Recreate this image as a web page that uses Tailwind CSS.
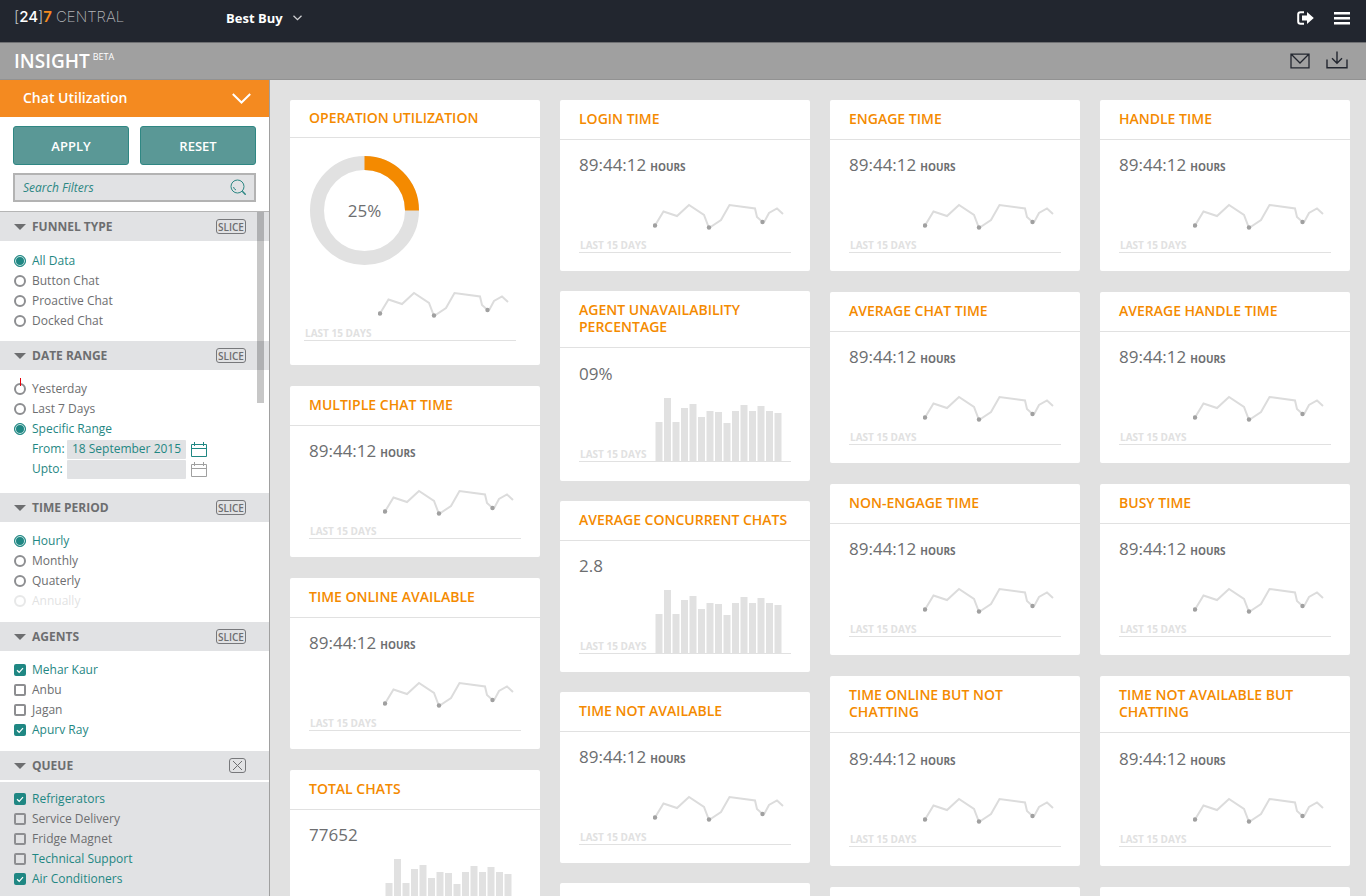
<!DOCTYPE html>
<html lang="en">
<head>
    <meta charset="UTF-8">
    <meta name="viewport" content="width=device-width, initial-scale=1.0">
    <title>[24]7 Central - Insight</title>
    <script src="https://cdn.jsdelivr.net/npm/@tailwindcss/browser@4"></script>
</head>
<body class="flex h-screen flex-col overflow-hidden bg-[#e1e1e1] font-['Open_Sans','Noto_Sans',sans-serif] text-[#6d6e70]">
    <!-- shared drawings -->
    <svg class="hidden" xmlns="http://www.w3.org/2000/svg">
        <symbol id="spark" viewBox="0 0 132 28">
            <path d="M2 22.5 10.5 8.5 24 13 36 2 51 12 56 25 68 17 76.5 2 102 5.5 104 14 109.5 19 111.5 18.5 116 10 124 5.5 130 11" fill="none" stroke="#dcdcdc" stroke-width="2"/>
            <g fill="#a0a0a0"><circle cx="2" cy="22.5" r="2.2"/><circle cx="56" cy="24.5" r="2.2"/><circle cx="109.5" cy="19" r="2.2"/></g>
        </symbol>
        <symbol id="bars" viewBox="0 0 128 63">
            <path fill="#e1e1e1" d="M.5 24h7v39h-7zM9 0h7v63H9zM17.5 24h7v39h-7zM26 10h7v53h-7zM34.5 6h7v57h-7zM43 19h7v44h-7zM51.5 13h7v50h-7zM60 14h7v49h-7zM68.5 25h7v38h-7zM77 13h7v50h-7zM85.5 7h7v56h-7zM94 13h7v50h-7zM102.5 8h7v55h-7zM111 13h7v50h-7zM119.5 15h7v48h-7z"/>
        </symbol>
        <symbol id="cal" viewBox="0 0 16 15">
            <path d="M.5 2.5h15v12H.5zM.5 6.5h15M3.5 0v4M12.5 0v4" fill="none" stroke="currentColor"/>
        </symbol>
        <symbol id="tri" viewBox="0 0 12 6"><path d="M0 0h12L6 6z" fill="currentColor"/></symbol>
        <symbol id="tick" viewBox="0 0 12 12"><path d="M3 6.2 5.2 8.3 9 4.2" fill="none" stroke="#fff" stroke-width="1.2"/></symbol>
    </svg>

    <header class="flex h-[43px] shrink-0 items-start border-b border-[#6f7073] bg-[#22262f] text-white">
        <a href="#" class="flex w-[218px] pl-[14px] pt-[7px] font-['Inter',sans-serif] text-[15px] leading-5">
            <span class="font-light text-[#c4c5c8]">[</span><span class="font-medium">24</span><span class="font-light text-[#c4c5c8]">]</span><span class="font-semibold text-[#f58a1f]">7</span>
            <span class="pl-1 font-extralight text-[#b4b5b9]">CENTRAL</span>
        </a>
        <div class="flex items-center pl-2 pt-2">
            <select aria-label="Client" class="w-[67px] appearance-none bg-transparent text-[13px] font-bold leading-5 outline-none">
                <option>Best Buy</option>
            </select>
            <svg class="h-[6px] w-[9px]" viewBox="0 0 9 6" fill="none" stroke="#d0d1d3" stroke-width="1.3"><path d="M.5.8 4.5 4.6 8.5.8"/></svg>
        </div>
        <div class="ml-auto flex items-center gap-5 pr-4 pt-[11px]">
            <button type="button" aria-label="Log out">
                <svg class="h-[14px] w-[17px]" viewBox="0 0 17 14"><path d="M7 1.2H3.5Q1.2 1.2 1.2 3.5v7q0 2.3 2.3 2.3H7" fill="none" stroke="#fff" stroke-width="2"/><path d="M5 4.5h5V1l6.8 6L10 13V9.5H5z" fill="#fff"/></svg>
            </button>
            <button type="button" aria-label="Menu">
                <svg class="h-[14px] w-4" viewBox="0 0 16 14" fill="#fff"><path d="M0 1h16v2.5H0zM0 6h16v2.5H0zM0 11h16v2.5H0z"/></svg>
            </button>
        </div>
    </header>

    <div class="flex h-[37px] shrink-0 items-center justify-between border-b border-[#929292] bg-[#a0a0a0] pl-[14px] pr-[18px]">
        <h1 class="flex text-[19px] font-semibold leading-6 text-white">INSIGHT<span class="pl-[3px] text-[9px] font-normal leading-4">BETA</span></h1>
        <div class="flex gap-4 text-[#22262f]">
            <button type="button" aria-label="Mail">
                <svg class="h-5 w-5" viewBox="0 0 20 20" fill="none" stroke="currentColor" stroke-width="1.3"><path d="M1 3.2h18v13.6H1zM1.5 3.5 10 12l8.500-8.500"/></svg>
            </button>
            <button type="button" aria-label="Download">
                <svg class="h-5 w-[22px]" viewBox="0 0 22 20" fill="none" stroke="currentColor" stroke-width="1.4"><path d="M1 8.5v8.300h20V8.5M11 .5v11.500M6 7.300l5 5 5-5"/></svg>
            </button>
        </div>
    </div>

    <div class="flex min-h-0 flex-1">
        <aside class="flex w-[270px] shrink-0 flex-col border-r border-[#a0a0a0] bg-white">
            <div class="grid shrink-0 items-center bg-[#f48a20] text-white">
                <select aria-label="Report" class="col-start-1 row-start-1 h-[37px] appearance-none bg-transparent pb-[2px] pl-[23px] text-[14px] font-semibold outline-none">
                    <option>Chat Utilization</option>
                </select>
                <svg class="pointer-events-none col-start-1 row-start-1 mr-[18px] h-[11px] w-[19px] justify-self-end" viewBox="0 0 19 11" fill="none" stroke="#fff" stroke-width="2"><path d="M.8 1 9.5 9.5 18.2 1"/></svg>
            </div>
            <div class="grid shrink-0 grid-cols-2 gap-x-[11px] gap-y-2 border-b border-[#b5b5b5] px-[13px] py-[9px]">
                <button type="button" class="h-[39px] rounded-[3px] border border-[#2f8783] bg-[#5a9896] pt-[2px] text-[13px] font-semibold text-white">APPLY</button>
                <button type="button" class="h-[39px] rounded-[3px] border border-[#2f8783] bg-[#5a9896] pt-[2px] text-[13px] font-semibold text-white">RESET</button>
                <div class="col-span-2 flex h-[29px] items-center border-2 border-[#b3b3b3] bg-[#e1e2e4] px-2">
                    <input type="search" aria-label="Search Filters" placeholder="Search Filters" class="min-w-0 flex-1 bg-transparent text-[12px] italic outline-none placeholder:text-[#2c8783]">
                    <svg class="mb-[2px] h-4 w-4" viewBox="0 0 16 16" fill="none" stroke="#2c8783"><circle cx="7.5" cy="7.5" r="6.5"/><path d="M3.5 8a4 4 0 0 0 2.5 3"/><path d="m12.3 12.3 3.4 3.4" stroke-width="1.5"/></svg>
                </div>
            </div>
            <form class="relative min-h-0 flex-1 overflow-hidden text-[12px] leading-5">
                <div id="filters"></div>
                <div class="absolute right-[5px] top-0 h-[191px] w-[7px] bg-black/22"></div>
            </form>
        </aside>

        <main id="cards" class="grid min-w-0 flex-1 grid-cols-4 gap-x-5 overflow-hidden pl-5 pr-4 pt-5"></main>
    </div>

    <script>
        const ON = 'text-[#1f8783]';
        const filters = [
            { name: 'FUNNEL TYPE', type: 'radio', pad: 'pt-[10px] pb-[10px]', items: ['*All Data', 'Button Chat', 'Proactive Chat', 'Docked Chat'] },
            { name: 'DATE RANGE', type: 'radio', pad: 'pt-[9px] pb-[14px]', items: ['Yesterday', 'Last 7 Days', '*Specific Range'], range: true },
            { name: 'TIME PERIOD', type: 'radio', pad: 'pt-[9px] pb-[11px]', items: ['*Hourly', 'Monthly', 'Quaterly', '-Annually'] },
            { name: 'AGENTS', type: 'checkbox', pad: 'pt-[9px] pb-[11px]', items: ['*Mehar Kaur', 'Anbu', 'Jagan', '*Apurv Ray'] },
            { name: 'QUEUE', type: 'checkbox', pad: 'border-t-2 border-white bg-[#e1e2e4] pt-[7px] pb-[7px]', items: ['*Refrigerators', 'Service Delivery', 'Fridge Magnet', '+Technical Support', '*Air Conditioners'], close: true }
        ];

        // leading mark: * checked, + highlighted, - disabled
        function option(f, raw) {
            const flag = '*-+'.includes(raw[0]) ? raw[0] : '';
            const text = flag ? raw.slice(1) : raw;
            const tone = flag === '-' ? 'opacity-20' : flag ? ON : '';
            const attrs = (flag === '*' ? 'checked ' : '') + (flag === '-' ? 'disabled' : '');
            const box = f.type === 'radio'
                ? 'rounded-full checked:border checked:shadow-[inset_0_0_0_1px_#d5eae9]'
                : 'rounded-[2px]';
            return `<label class="relative flex items-center gap-[6px] ${tone}">
                <span class="grid">
                    <input type="${f.type}" name="${f.name}" ${attrs} class="peer col-start-1 row-start-1 h-3 w-3 appearance-none border-2 border-[#8d8e91] checked:border-[#1f8783] checked:bg-[#1f8783] ${box}">
                    ${f.type === 'checkbox' ? '<svg class="invisible col-start-1 row-start-1 h-3 w-3 peer-checked:visible"><use href="#tick"/></svg>' : ''}
                </span>${text}
                ${text === 'Yesterday' ? '<i class="absolute left-[6px] top-[-1px] h-2 w-px bg-red-600"></i>' : ''}
            </label>`;
        }

        function dateRow(id, label, value, tone) {
            return `<div class="flex h-5 items-center pl-[18px] ${ON}">
                <label for="${id}" class="w-[35px]">${label}</label>
                <input id="${id}" type="text" value="${value}" class="h-[19px] w-[119px] rounded-[1px] bg-[#e1e2e4] text-center outline-none">
                <button type="button" aria-label="Pick date" class="ml-[5px] ${tone}"><svg class="h-[15px] w-4"><use href="#cal"/></svg></button>
            </div>`;
        }

        document.getElementById('filters').innerHTML = filters.map(f => `
            <section>
                <h2 class="flex h-[29px] items-center bg-[#e1e2e4] pl-[14px] pr-[23px]">
                    <button type="button" class="flex items-center gap-[6px] font-bold"><svg class="h-[6px] w-3"><use href="#tri"/></svg>${f.name}</button>
                    ${f.close
                        ? '<button type="button" aria-label="Remove filter" class="ml-auto grid h-[15px] w-[17px] place-items-center rounded-[3px] border border-[#77787b]"><svg class="h-[9px] w-[9px]" viewBox="0 0 9 9" stroke="#6d6e70"><path d="M0 0 9 9M9 0 0 9"/></svg></button>'
                        : '<button type="button" class="ml-auto h-[15px] w-[30px] rounded-[3px] border border-[#77787b] text-[10px] font-semibold leading-3">SLICE</button>'}
                </h2>
                <div class="pl-[14px] ${f.pad}">
                    ${f.items.map(i => option(f, i)).join('')}
                    ${f.range ? dateRow('from', 'From:', '18 September 2015', '') + dateRow('upto', 'Upto:', '', 'text-[#a0a0a0]') : ''}
                </div>
            </section>`).join('');

        const T = '89:44:12';
        const columns = [
            { gap: 'gap-[21px]', cards: [
                { title: 'OPERATION UTILIZATION', donut: true },
                { title: 'MULTIPLE CHAT TIME', value: T },
                { title: 'TIME ONLINE AVAILABLE', value: T },
                { title: 'TOTAL CHATS', value: '77652', bars: true }] },
            { gap: 'gap-5', cards: [
                { title: 'LOGIN TIME', value: T },
                { title: 'AGENT UNAVAILABILITY<br>PERCENTAGE', value: '09%', bars: true, tall: true },
                { title: 'AVERAGE CONCURRENT CHATS', value: '2.8', bars: true },
                { title: 'TIME NOT AVAILABLE', value: T },
                {}] },
            { gap: 'gap-[21px]', cards: [
                { title: 'ENGAGE TIME', value: T },
                { title: 'AVERAGE CHAT TIME', value: T },
                { title: 'NON-ENGAGE TIME', value: T },
                { title: 'TIME ONLINE BUT NOT<br>CHATTING', value: T, tall: true },
                {}] },
            { gap: 'gap-[21px]', cards: [
                { title: 'HANDLE TIME', value: T },
                { title: 'AVERAGE HANDLE TIME', value: T },
                { title: 'BUSY TIME', value: T },
                { title: 'TIME NOT AVAILABLE BUT<br>CHATTING', value: T, tall: true },
                {}] }
        ];

        const donut = `<div class="grid h-[109px] w-[109px] place-items-center">
            <svg class="col-start-1 row-start-1 h-[109px] w-[109px]" viewBox="0 0 109 109" fill="none" stroke-width="14">
                <circle cx="54.5" cy="54.5" r="47.5" stroke="#e1e1e1"/>
                <path d="M54.5 7A47.5 47.5 0 0 1 102 54.5" stroke="#f48a00"/>
            </svg>
            <span class="col-start-1 row-start-1 text-[17px]">25%</span>
        </div>`;

        function footer(c) {
            return `<div class="flex h-19 items-end justify-between border-b border-[#e1e1e1]">
                <span class="mb-px pl-px text-[10px] font-bold leading-3 text-[#e1e1e1]">LAST 15 DAYS</span>
                ${c.bars ? '<svg class="mr-2 h-[63px] w-[128px]"><use href="#bars"/></svg>'
                         : '<svg class="mb-[21px] mr-[6px] h-7 w-[132px]"><use href="#spark"/></svg>'}
            </div>`;
        }

        function card(c) {
            if (!c.title) return '<article class="h-[171px] shrink-0 rounded-[2px] bg-white"></article>';
            if (c.donut) return `<article class="shrink-0 rounded-[2px] bg-white">
                <h3 class="border-b border-[#e1e1e1] pb-[11px] pl-[19px] pt-[9px] text-[14px] font-semibold leading-[17px] text-[#f48a00]">${c.title}</h3>
                <div class="pl-5 pt-[18px]">${donut}</div>
                <div class="pb-6 pl-[14px] pr-6">${footer(c)}</div>
            </article>`;
            const unit = c.value === T ? '<span class="pl-1 text-[10px] font-bold">HOURS</span>' : '';
            return `<article class="shrink-0 rounded-[2px] bg-white">
                <h3 class="border-b border-[#e1e1e1] pb-3 pl-[19px] pt-[10px] text-[14px] font-semibold leading-[17px] text-[#f48a00]">${c.title}</h3>
                <div class="px-[19px] ${c.tall ? 'pt-[14px] pb-[19px]' : 'pt-[13px] pb-[18px]'}">
                    <p class="h-6 text-[17px] leading-6">${c.value}${unit}</p>
                    ${footer(c)}
                </div>
            </article>`;
        }

        document.getElementById('cards').innerHTML = columns.map(col =>
            `<div class="flex min-w-0 flex-col ${col.gap}">${col.cards.map(card).join('')}</div>`).join('');
    </script>
</body>
</html>
